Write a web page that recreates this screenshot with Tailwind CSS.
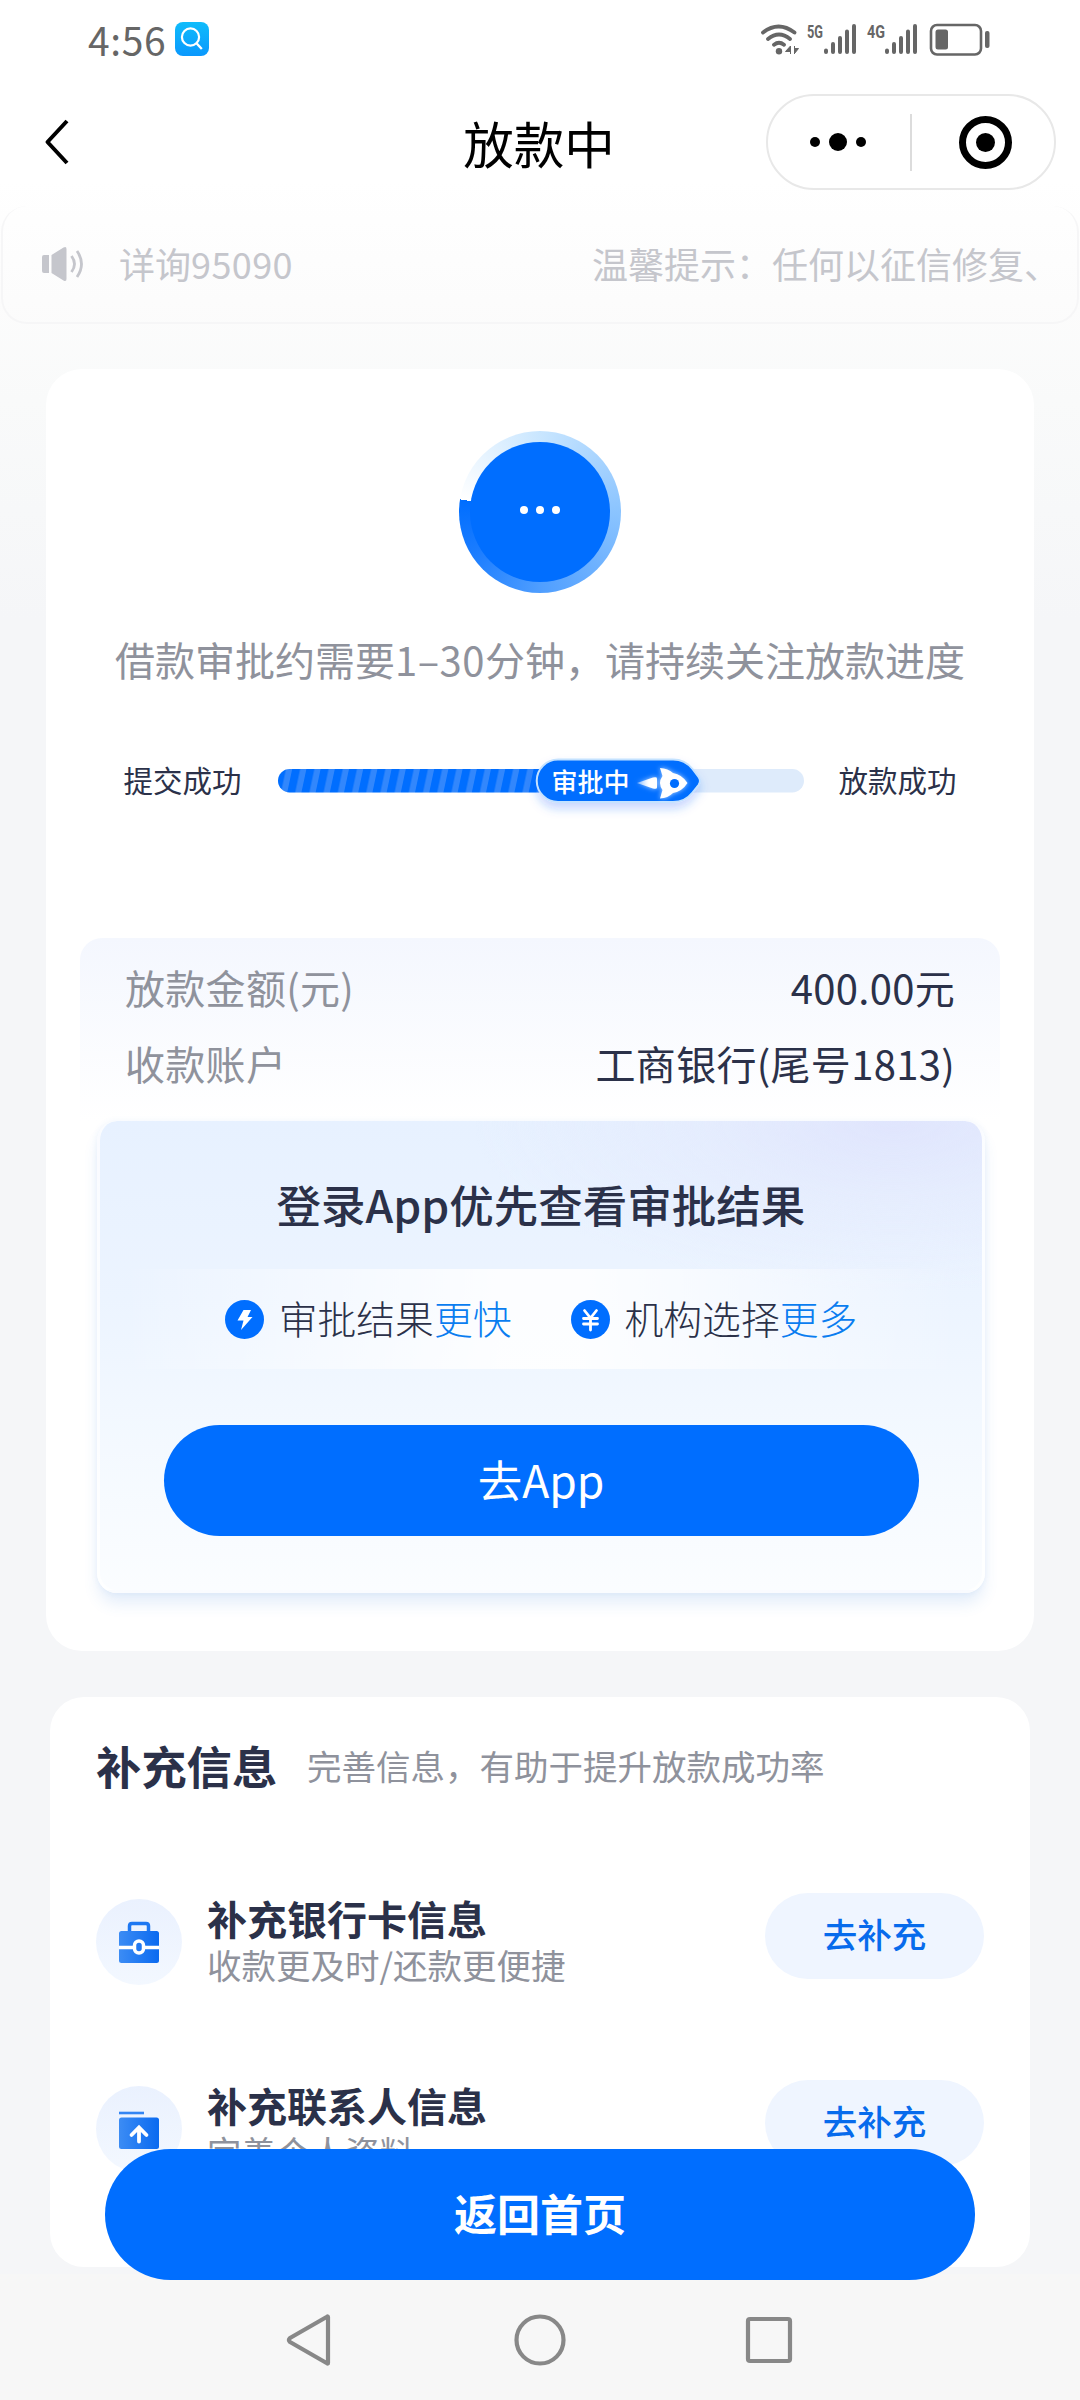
<!DOCTYPE html>
<html lang="zh-CN">
<head>
<meta charset="utf-8">
<title>放款中</title>
<script src="https://cdn.jsdelivr.net/npm/@tailwindcss/browser@4"></script>
</head>
<body class="bg-[#f5f6f8]">
<div class="relative flex h-[2400px] w-[1080px] flex-col overflow-hidden bg-[#f5f6f8] bg-[linear-gradient(to_bottom,#ffffff_180px,#fcfcfc_300px,#f9fafa_400px,#f5f6f8_620px)] font-['Noto_Sans_CJK_SC',sans-serif] text-[#2b3149]">

  <!-- status bar -->
  <header class="flex h-20 shrink-0 items-start justify-between pl-[88px] pr-[90px] pt-[22px]">
    <div class="flex items-center">
      <span class="w-[87px] whitespace-nowrap text-[39px] leading-[34px] tracking-[0.6px] text-[#666]">4:56</span>
      <svg class="h-[34px] w-[34px]" viewBox="0 0 34 34" fill="none">
        <defs><linearGradient id="sg" x1="0" y1="0" x2="0" y2="1"><stop stop-color="#0fbcfb"/><stop offset="1" stop-color="#0a98fd"/></linearGradient></defs>
        <rect width="34" height="34" rx="8" fill="url(#sg)"/>
        <circle cx="15.5" cy="15" r="8.6" stroke="#fff" stroke-width="2.2"/><path d="M21.5 21.3l5.3 5.7" stroke="#fff" stroke-width="2.4"/>
      </svg>
    </div>
    <svg class="h-[34px] w-[230px]" viewBox="760 22 230 34" fill="none">
      <g stroke="#666" stroke-width="3.8" stroke-linecap="round">
        <path d="M763 32.500q15.500-12 31.500 0M768 39q11-9 22 0M774 44.800q5-4 10 0"/>
      </g>
      <circle cx="779" cy="51.200" r="3.200" fill="#666"/>
      <path d="M790.500 46v8M785.500 51.500l5-5.500v5.500zM794.500 46v8M798.500 48.500l-4 5v-5z" stroke="#666" stroke-width="1" fill="#666"/>
      <g fill="#666" font-family="Roboto" font-size="18" font-weight="700">
        <text x="807" y="37.500" textLength="16" lengthAdjust="spacingAndGlyphs">5G</text>
        <text x="867" y="37.500" textLength="18" lengthAdjust="spacingAndGlyphs">4G</text>
      </g>
      <g stroke="#666" stroke-width="4" stroke-linecap="round">
        <path d="M826 50.500v1.500M833 44v8M840 38v14M847 31.500v20.500M854 26v26M887 50.500v1.500M894 44v8M901 38v14M908 31.500v20.500M915 26v26"/>
      </g>
      <rect x="931" y="25" width="50" height="29.500" rx="6" stroke="#666" stroke-width="2.600"/>
      <rect x="935.500" y="29.500" width="12.500" height="20" rx="2.500" fill="#666"/>
      <rect x="985" y="31" width="4.500" height="17" rx="2" fill="#666"/>
    </svg>
  </header>

  <!-- title bar -->
  <div class="grid h-[126px] shrink-0 grid-cols-3 items-start pl-[44px] pr-[24px] pt-[13px]">
    <svg class="mt-[25px] h-12 w-7" viewBox="0 0 28 48" fill="none" stroke="#000" stroke-width="4" stroke-linejoin="round"><path d="M23 3L3.500 24L23 45"/></svg>
    <h1 class="pr-[22px] text-center text-[50.500px] leading-[98px] text-black">放款中</h1>
    <div class="mt-[1px] flex h-[96px] w-[290px] items-center justify-self-end rounded-full border-2 border-[#e8e8e8] bg-white">
      <svg class="h-[92px] w-[286px]" viewBox="768 96 286 92">
        <circle cx="815" cy="142" r="5"/><circle cx="838" cy="142" r="9"/><circle cx="861" cy="142" r="5"/>
        <path d="M911 114v57" stroke="#dcdcdc" stroke-width="2"/>
        <circle cx="985.500" cy="142.500" r="23" fill="none" stroke="#000" stroke-width="7"/><circle cx="985.500" cy="142.500" r="9.500"/>
      </svg>
    </div>
  </div>

  <!-- notice -->
  <div class="mx-[1px] flex h-[118px] shrink-0 items-center rounded-[26px] border-2 border-t-0 border-[#f6f6f7] pl-[39px] pr-8 text-[36px] leading-[54px] text-[#c5c6cc]">
    <svg class="mr-[34px] h-9 w-[43px] shrink-0" viewBox="0 0 43 36" fill="none">
      <path d="M2 9h5v18H2a2 2 0 0 1-2-2V11a2 2 0 0 1 2-2zM9.500 9l12-7.500q3-1.500 3 1.500v30q0 3-3 1.500L9.500 27z" fill="#c5c6cc"/>
      <path d="M29.500 10q6 8 0 16M35 5q9 13 0 26" stroke="#c5c6cc" stroke-width="2.800"/>
    </svg>
    <span class="whitespace-nowrap pb-[2px]">详询<span class="tracking-[0.4px]">95090</span></span>
    <span class="ml-auto w-[453px] overflow-hidden whitespace-nowrap pb-[2px]">温馨提示：任何以征信修复、</span>
  </div>

  <!-- loan status card -->
  <section class="mx-[46px] mt-[45px] flex h-[1282px] shrink-0 flex-col items-center rounded-[36px] bg-white pt-[62px]">
    <div class="flex h-[162px] w-[162px] items-center justify-center rounded-full bg-[conic-gradient(from_279deg,#ffffff_0deg,#c9e6ff_81deg,#8bc4ff_171deg,#4f9eff_261deg,#1a7cff_320deg,#006eff_360deg)]">
      <div class="flex h-[140px] w-[140px] items-center justify-center gap-2 rounded-full bg-[#006eff] pb-1">
        <i class="h-2 w-2 rounded-full bg-white"></i><i class="h-2 w-2 rounded-full bg-white"></i><i class="h-2 w-2 rounded-full bg-white"></i>
      </div>
    </div>
    <p class="mt-[36px] whitespace-nowrap text-[40px] leading-[60px] text-[#8f929c]">借款审批约需要<span class="tracking-[0.5px]">1–30</span>分钟，请持续关注放款进度</p>

    <div class="mt-[59px] flex h-[64px] items-center whitespace-nowrap text-[29.500px] leading-[44px]">
      <span class="w-[152px] pb-[3px]">提交成功</span>
      <svg class="-my-2 h-20 w-[530px]" viewBox="275 740 530 80">
        <defs>
          <pattern id="st" width="14.200" height="24" patternUnits="userSpaceOnUse" patternTransform="translate(277 769) skewX(-12)"><rect width="14.200" height="24" fill="#006eff"/><rect x="8" width="6.200" height="24" fill="#3287fc"/></pattern>
          <linearGradient id="fl" x1="0" x2="1"><stop stop-color="#fff" stop-opacity=".4"/><stop offset=".6" stop-color="#fff"/></linearGradient>
          <filter id="sh" x="-20%" y="-30%" width="140%" height="190%"><feDropShadow dx="0" dy="6" stdDeviation="5" flood-color="#1462ff" flood-opacity=".25"/></filter>
          <filter id="gl" x="-30%" y="-40%" width="160%" height="180%"><feDropShadow dx="0" dy="0" stdDeviation="2.500" flood-color="#fff" flood-opacity=".7"/></filter>
        </defs>
        <rect x="277" y="769" width="526" height="23.500" rx="11.700" fill="#deebfb"/>
        <rect x="277" y="769" width="290" height="23.500" rx="11.700" fill="url(#st)"/>
        <path d="M557 759.500h115q12 0 19.500 9.500l6 8q3 4 0 8l-6 7.500q-7.500 9.500-19.500 9.500H557a21.200 21.200 0 0 1 0-42.500z" fill="#006eff" stroke="#c4e2ff" stroke-width="2" filter="url(#sh)"/>
        <text x="550.500" y="792" font-size="26" font-weight="500" fill="#fff">审批中</text>
        <g filter="url(#gl)" fill="#fff">
          <path d="M636 783l16-5.500q4-1 4 1v9q0 2-4 1z" fill="url(#fl)"/>
          <path d="M659 768q8 .5 13 5q9 1.500 14.500 10q-5.500 8.500-14.500 10q-5 5-13 5.500l2.500-8.500q-5-7 0-14z"/>
        </g>
        <circle cx="673.500" cy="783.500" r="4.600" fill="#006eff"/>
      </svg>
      <span class="w-[151px] pb-[3px] text-right">放款成功</span>
    </div>

    <div class="mt-[126px] flex h-[183px] w-[920px] flex-col rounded-t-[22px] bg-linear-to-b from-[#f4f7fe] to-white pl-[45px] pr-[45px] pt-[11px] text-[40px] leading-[76px] tracking-[0.3px]">
      <div class="flex justify-between"><span class="text-[#8f929c]">放款金额(元)</span><span>400.00元</span></div>
      <div class="flex justify-between"><span class="text-[#8f929c]">收款账户</span><span>工商银行(尾号1813)</span></div>
    </div>

    <div class="ml-[2px] flex h-[472px] w-[888px] flex-col items-center rounded-[20px] border-[3px] border-t-0 border-white/80 bg-[radial-gradient(ellipse_420px_170px_at_90%_0%,#e0e5fd_0%,#e3e9fd90_45%,#e6f1ff00_100%),linear-gradient(to_bottom,#e7f1ff_0%,#ecf4ff_38%,#f2f8ff_62%,#fbfdff_100%)] pt-[50px] shadow-[0_12px_16px_-2px_rgba(60,130,220,0.14),0_0_6px_rgba(60,130,220,0.08)]">
      <h2 class="whitespace-nowrap text-[44.500px] font-medium leading-[66px]">登录App优先查看审批结果</h2>
      <div class="mt-[32px] flex h-[100px] w-[840px] items-center justify-center gap-[59px] whitespace-nowrap bg-[linear-gradient(to_right,transparent,rgba(255,255,255,0.85)_45%,rgba(255,255,255,0.85)_55%,transparent)] text-[38.800px] font-light leading-[58px]">
        <div class="flex items-center gap-[15px]">
          <svg class="h-[39px] w-[39px]" viewBox="0 0 39 39"><circle cx="19.500" cy="19.500" r="19.500" fill="#006eff"/><path d="M18.500 10h7.500l-3.500 7h5L16 30l2.500-9.500h-6z" fill="#fff"/></svg>
          <span class="pb-1">审批结果<b class="font-light text-[#0a7df0]">更快</b></span>
        </div>
        <div class="flex items-center gap-[15px]">
          <svg class="h-[39px] w-[39px]" viewBox="0 0 39 39" fill="none"><circle cx="19.500" cy="19.500" r="19.500" fill="#006eff"/><path d="M13.500 10.500l6 7.500l6-7.500M12.500 18.500h14M12.500 24h14M19.500 18v12" stroke="#fff" stroke-width="2.800" stroke-linecap="round"/></svg>
          <span class="pb-1">机构选择<b class="font-light text-[#0a7df0]">更多</b></span>
        </div>
      </div>
      <button class="mt-[56px] h-[111px] w-[755px] rounded-full bg-[#006eff] pb-[3px] text-[44.500px] leading-[66px] text-white">去App</button>
    </div>
  </section>

  <!-- supplementary info card -->
  <section class="mx-[50px] mt-[46px] h-[570px] shrink-0 rounded-[34px] bg-white pl-[46px] pr-[46px] pt-[34px]">
    <div class="flex items-center whitespace-nowrap">
      <h2 class="w-[211px] text-[45.300px] font-bold leading-[68px]">补充信息</h2>
      <span class="text-[34.500px] leading-[68px] text-[#8f929c]">完善信息，有助于提升放款成功率</span>
    </div>
    <div class="mt-[92px] flex h-[97px] items-start">
      <svg class="mt-[8px] h-[86px] w-[86px]" viewBox="0 0 86 86" fill="none">
        <defs><linearGradient id="ic" x1="0" y1="0" x2="1" y2="0"><stop stop-color="#3c8cf4"/><stop offset="1" stop-color="#0a6af0"/></linearGradient><linearGradient id="cb" x1="0" y1="0" x2="0" y2="1"><stop stop-color="#eaf1fe"/><stop offset="1" stop-color="#f3f8ff"/></linearGradient></defs>
        <circle cx="43" cy="43" r="43" fill="url(#cb)"/>
        <path d="M33.500 34V27q0-2.500 2.500-2.500h14q2.500 0 2.500 2.500v7" stroke="#1e78f2" stroke-width="3.500"/>
        <rect x="23" y="32" width="40" height="32" rx="2.500" fill="url(#ic)"/>
        <path d="M23 48.500h40" stroke="#fff" stroke-width="3.500"/><rect x="38.500" y="42" width="9" height="12" rx="4.500" fill="#2178f2" stroke="#fff" stroke-width="3.500"/>
      </svg>
      <div class="ml-[25px] whitespace-nowrap">
        <h3 class="text-[40px] font-bold leading-[55px]">补充银行卡信息</h3>
        <p class="text-[34.500px] leading-[36px] text-[#8f929c]">收款更及时/还款更便捷</p>
      </div>
      <button class="ml-auto mt-[2px] h-[86px] w-[219px] rounded-full bg-[#eff5ff] pb-[7px] text-[34.500px] font-medium leading-[52px] text-[#076bec]">去补充</button>
    </div>
    <div class="mt-[90px] flex h-[97px] items-start">
      <svg class="mt-[8px] h-[86px] w-[86px]" viewBox="0 0 86 86" fill="none">
        <circle cx="43" cy="43" r="43" fill="url(#cb)"/>
        <path d="M23 27h25" stroke="#3385f3" stroke-width="2.600"/>
        <rect x="23" y="31.500" width="40" height="31.500" rx="2.500" fill="url(#ic)"/>
        <path d="M43 55.500V42M35.500 49l7.500-7.500l7.500 7.500" stroke="#fff" stroke-width="3.800" stroke-linecap="round"/>
      </svg>
      <div class="ml-[25px] whitespace-nowrap">
        <h3 class="text-[40px] font-bold leading-[55px]">补充联系人信息</h3>
        <p class="text-[34.500px] leading-[36px] text-[#8f929c]">完善个人资料</p>
      </div>
      <button class="ml-auto mt-[2px] h-[86px] w-[219px] rounded-full bg-[#eff5ff] pb-[7px] text-[34.500px] font-medium leading-[52px] text-[#076bec]">去补充</button>
    </div>
  </section>

  <!-- floating action and system navigation -->
  <button class="absolute left-[105px] top-[2149px] z-10 h-[131px] w-[870px] rounded-full bg-[#006eff] pb-[5px] text-[43px] font-bold leading-[64px] text-white">返回首页</button>
  <nav class="mt-auto flex h-[126px] shrink-0 items-center justify-center bg-[#f7f7f7] pt-[6px]">
    <svg class="h-[60px] w-[520px]" viewBox="280 2310 520 60" fill="none" stroke="#888" stroke-width="4.200" stroke-linejoin="round">
      <path d="M328 2317v46q0 1-1 .3L290 2342q-2-2 0-4L327 2316.700q1-.7 1 .3z"/>
      <circle cx="540" cy="2340" r="23.500"/><rect x="748" y="2319" width="42" height="42" rx="2"/>
    </svg>
  </nav>
</div>
</body>
</html>
